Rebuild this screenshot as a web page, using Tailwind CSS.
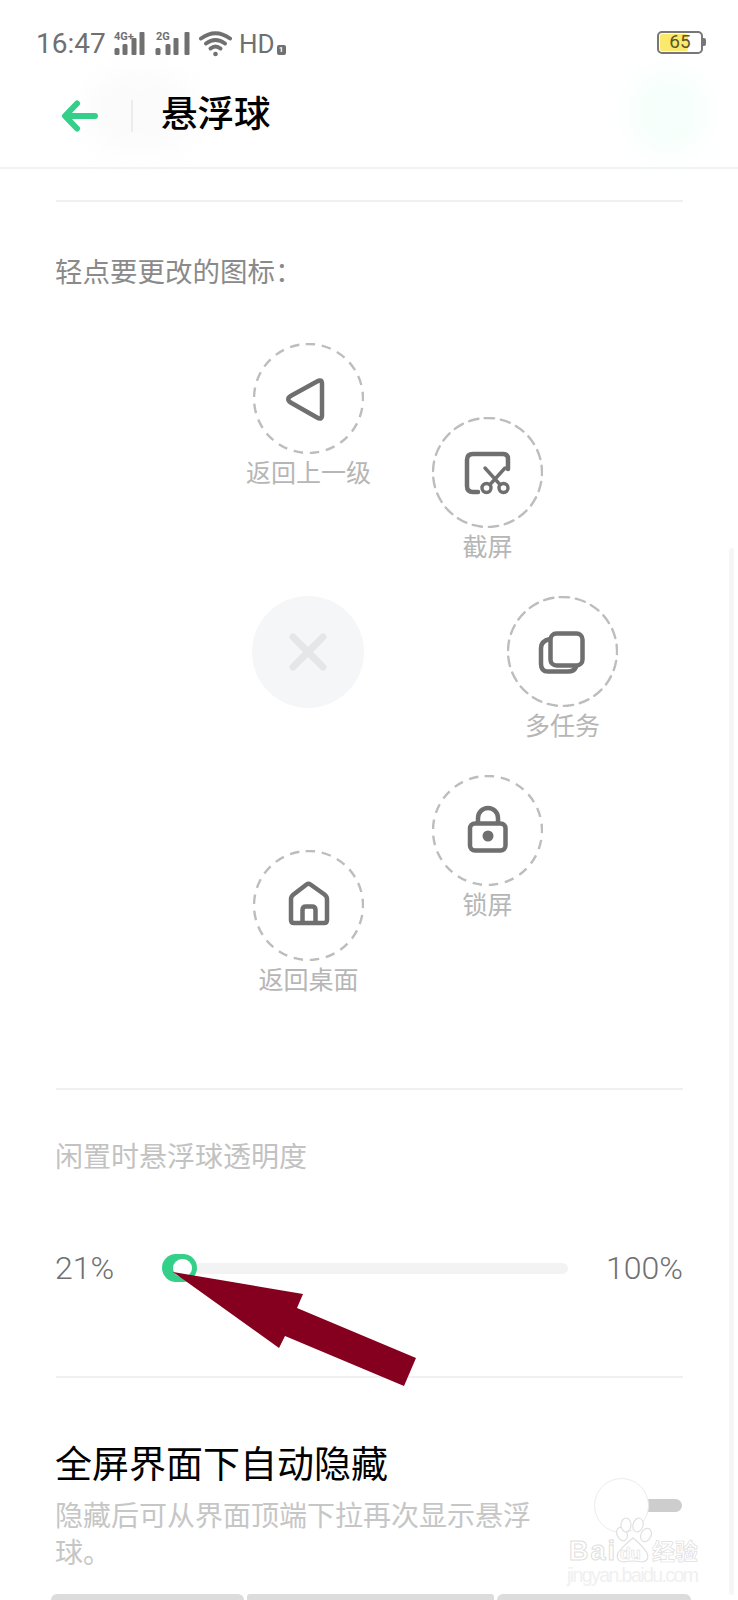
<!DOCTYPE html>
<html lang="zh-CN">
<head>
  <meta charset="UTF-8" />
  <meta name="viewport" content="width=device-width, initial-scale=1.0"/>
  <title>悬浮球</title>
  <script src="https://cdn.jsdelivr.net/npm/@tailwindcss/browser@4"></script>
</head>
<body class="bg-white">
<div class="relative w-[738px] h-[1600px] overflow-hidden bg-white [font-family:Roboto,'Noto_Sans_CJK_SC',sans-serif]">

  <!-- Faint smudges left in the header -->
  <div class="absolute left-[85px] top-[72px] w-[110px] h-[80px] rounded-full bg-[#fbfbfb] blur-md"></div>
  <div class="absolute left-[628px] top-[70px] w-[80px] h-[85px] rounded-full bg-[#f6fffb] blur-md"></div>

  <!-- Scrollbar -->
  <div class="absolute left-[729px] top-[548px] w-[5px] h-[1047px] rounded-full bg-[#f6f6f6]"></div>

  <!-- Status bar -->
  <div class="relative h-[74px] pt-[13px] pl-[36px] pr-[35px] flex items-center justify-between text-[#707070]">
    <div class="flex items-center">
      <span class="text-[28px] leading-none w-[78px]">16:47</span>
      <svg class="w-[80px] h-[26px]" viewBox="0 0 80 26" fill="#707070">
        <text x="0" y="9" font-size="11" font-weight="700" font-family="Roboto">4G+</text>
        <rect x="0.5" y="17" width="5" height="7" rx="1.5"/><rect x="8.5" y="13" width="5" height="11" rx="1.5"/><rect x="17.5" y="7" width="5" height="17" rx="1"/><rect x="25.5" y="1" width="5" height="23" rx="1"/>
        <text x="42" y="9" font-size="11" font-weight="700" font-family="Roboto">2G</text>
        <rect x="41.5" y="17" width="5" height="7" rx="1.5"/><rect x="51.5" y="13" width="5" height="11" rx="1.5"/><rect x="59.5" y="7" width="5" height="17" rx="1"/><rect x="70.5" y="1" width="5" height="23" rx="1"/>
      </svg>
      <svg class="w-[33px] h-[26px] ml-[5px]" viewBox="0 0 33 26" fill="none" stroke="#707070" stroke-width="4" stroke-linecap="round">
        <path d="M2 7.5Q16.5 -3 31 7.5"/>
        <path d="M7 12.5Q16.5 5.5 26 12.5"/>
        <path d="M11.5 17.5Q16.5 13.5 21.5 17.5"/>
        <circle cx="16.5" cy="23" r="2.3" fill="#707070" stroke="none"/>
      </svg>
      <span class="ml-[7px] text-[26px] leading-none">HD</span>
      <span class="ml-[2px] mt-[12px] w-[9px] h-[10px] rounded-[2px] bg-[#707070] text-white text-[8px] leading-[10px] text-center font-bold">1</span>
    </div>
    <div class="relative w-[46px] h-[23px] mt-[-2px] rounded-[5px] border-[2.5px] border-[#777777] overflow-visible">
      <div class="absolute left-[1px] top-[1px] bottom-[1px] w-[28px] rounded-[2px] bg-[#fbe96e]"></div>
      <span class="relative block text-center text-[19px] leading-[18px] text-[#5e5522]">65</span>
      <div class="absolute right-[-5px] top-[5px] w-[3px] h-[8px] rounded-r-[2px] bg-[#777777]"></div>
    </div>
  </div>

  <!-- Title bar -->
  <div class="relative h-[95px] pb-[10px] flex items-center border-b-2 border-[#f2f2f2]">
    <svg class="ml-[61px] w-[38px] h-[32px]" viewBox="0 0 38 32" fill="none" stroke="#34d08a" stroke-width="6" stroke-linecap="round" stroke-linejoin="round">
      <path d="M34 16H5M16 3.5L4 16L16 28.5"/>
    </svg>
    <div class="ml-[32px] w-[2px] h-[32px] bg-[#ececec]"></div>
    <h1 class="ml-[28px] text-[36.5px] leading-none font-medium text-black">悬浮球</h1>
  </div>

  <div class="relative pl-[56px] pr-[55px]">
    <div class="mt-[31px] border-t-2 border-[#f0f0f0]"></div>
    <p class="mt-[51px] -ml-px text-[27.5px] leading-[40px] text-[#8a8a8a]">轻点要更改的图标&#xFF1A;</p>

    <!-- Floating ball menu: the item places are the content here -->
    <div class="relative h-[795px] text-[25px] leading-[40px] text-[#b6b6b6]">

      <div class="absolute left-[197px] top-[50px] w-[111px] flex flex-col items-center">
        <svg class="w-[111px] h-[111px]" viewBox="0 0 111 111" fill="none" stroke="#6f6f6f" stroke-width="4.5" stroke-linejoin="round">
          <circle cx="55.5" cy="55.5" r="54.5" transform="rotate(-93 55.5 55.5)" stroke="#bdbdbd" stroke-width="2.4" stroke-dasharray="9.5 6.8"/>
          <path d="M64 38.5Q69 35.5 69 41V72Q69 77.5 64 74.5L38.5 60Q32 56 38.5 52.5Z"/>
        </svg>
        <span class="whitespace-nowrap">返回上一级</span>
      </div>

      <div class="absolute left-[376px] top-[124px] w-[111px] flex flex-col items-center">
        <svg class="w-[111px] h-[111px]" viewBox="0 0 111 111" fill="none" stroke="#6f6f6f" stroke-width="4.5" stroke-linecap="round">
          <circle cx="55.5" cy="55.5" r="54.5" transform="rotate(-93 55.5 55.5)" stroke="#bdbdbd" stroke-width="2.4" stroke-dasharray="9.5 6.8"/>
          <path d="M76 52V42Q76 37 71 37H41Q35 37 35 43V69Q35 75 41 75H46"/>
          <g stroke-width="3.4">
            <circle cx="54.5" cy="71" r="4.5"/><circle cx="71.5" cy="71" r="4.5"/>
            <path d="M53 51L67.5 67M73 51L58.5 67"/>
          </g>
        </svg>
        <span class="whitespace-nowrap">截屏</span>
      </div>

      <div class="absolute left-[196px] top-[303px] w-[112px] h-[112px] rounded-full bg-[#f4f6f8] flex items-center justify-center">
        <svg class="w-[112px] h-[112px]" viewBox="0 0 112 112" fill="none" stroke="#e6e6e6" stroke-width="7" stroke-linecap="round">
          <path d="M41 41L71 71M71 41L41 71"/>
        </svg>
      </div>

      <div class="absolute left-[451px] top-[303px] w-[111px] flex flex-col items-center">
        <svg class="w-[111px] h-[111px]" viewBox="0 0 111 111" fill="none" stroke="#6f6f6f" stroke-width="4.5" stroke-linecap="round">
          <circle cx="55.5" cy="55.5" r="54.5" transform="rotate(-93 55.5 55.5)" stroke="#bdbdbd" stroke-width="2.4" stroke-dasharray="9.5 6.8"/>
          <rect x="43.5" y="37.5" width="32" height="32" rx="6"/>
          <path d="M43 43Q34 45 34 52V68Q34 75.5 41 75.5H61Q67 75.5 69 71"/>
        </svg>
        <span class="whitespace-nowrap">多任务</span>
      </div>

      <div class="absolute left-[376px] top-[482px] w-[111px] flex flex-col items-center">
        <svg class="w-[111px] h-[111px]" viewBox="0 0 111 111" fill="none" stroke="#6f6f6f" stroke-width="4.5">
          <circle cx="55.5" cy="55.5" r="54.5" transform="rotate(-93 55.5 55.5)" stroke="#bdbdbd" stroke-width="2.4" stroke-dasharray="9.5 6.8"/>
          <rect x="38" y="48.5" width="35.5" height="27" rx="5"/>
          <path d="M46 48V43A10 10 0 0 1 66 43V48"/>
          <circle cx="56" cy="61" r="5.5" fill="#6f6f6f" stroke="none"/>
        </svg>
        <span class="whitespace-nowrap">锁屏</span>
      </div>

      <div class="absolute left-[197px] top-[557px] w-[111px] flex flex-col items-center">
        <svg class="w-[111px] h-[111px]" viewBox="0 0 111 111" fill="none" stroke="#6f6f6f" stroke-width="4.5" stroke-linejoin="round">
          <circle cx="55.5" cy="55.5" r="54.5" transform="rotate(-93 55.5 55.5)" stroke="#bdbdbd" stroke-width="2.4" stroke-dasharray="9.5 6.8"/>
          <path d="M53.5 34.5Q55.5 33 57.5 34.5L71.5 44.5Q74 46.5 74 49V70Q74 73 71 73H41Q38 73 38 70V49Q38 46.5 40.5 44.5Z"/>
          <path d="M49.5 73V60Q49.5 56.5 53 56.5H59Q62.5 56.5 62.5 60V73"/>
        </svg>
        <span class="whitespace-nowrap">返回桌面</span>
      </div>
    </div>

    <div class="border-t-2 border-[#f0f0f0]"></div>
    <p class="mt-[48px] -ml-px text-[28px] leading-[40px] text-[#c2c2c2]">闲置时悬浮球透明度</p>

    <!-- Slider -->
    <div class="mt-[70px] h-[40px] flex items-center text-[32px] leading-none font-light text-[#707070]">
      <span class="w-[57px] -ml-px mr-px">21%</span>
      <div class="relative ml-[49px] w-[406px] h-[28px]">
        <div class="absolute left-[33px] right-0 top-[9px] h-[11px] rounded-full bg-[#f3f3f3]"></div>
        <div class="absolute left-0 top-0 w-[35px] h-[28px] rounded-full bg-[#34d08a]">
          <div class="ml-[11px] mt-[5px] w-[19px] h-[18px] rounded-full bg-white"></div>
        </div>
      </div>
      <span class="ml-auto">100%</span>
    </div>

    <div class="mt-[88px] border-t-2 border-[#f0f0f0]"></div>

    <!-- Auto hide row -->
    <h2 class="mt-[64px] -ml-px text-[37px] leading-[48px] text-black">全屏界面下自动隐藏</h2>
    <p class="mt-[8px] -ml-px w-[490px] text-[28px] leading-[37px] text-[#c6c6c6]">隐藏后可从界面顶端下拉再次显示悬浮球。</p>

    <!-- Cut-off row at the bottom edge -->
    <div class="mt-[22px] -ml-[5px] flex gap-[3px]">
      <div class="w-[193px] h-[12px] shrink-0 rounded-t-[6px] bg-[#dcdcdc]"></div>
      <div class="w-[247px] h-[12px] shrink-0 rounded-t-[3px] bg-[#dcdcdc]"></div>
      <div class="w-[194px] h-[12px] shrink-0 rounded-t-[6px] bg-[#dcdcdc]"></div>
    </div>
  </div>

  <!-- Switch -->
  <div class="absolute left-[647px] top-[1499px] w-[35px] h-[13px] rounded-r-full bg-[#cdcdcd]"></div>
  <div class="absolute left-[594px] top-[1478px] w-[55px] h-[55px] rounded-full border border-[#ececec] bg-white"></div>

  <!-- Red arrow drawn over the screenshot -->
  <svg class="absolute left-0 top-0 w-[738px] h-[1600px] pointer-events-none" viewBox="0 0 738 1600">
    <polygon points="173,1272 303,1294 297,1308 416,1358 404,1386 285,1336 279,1348" fill="#85001e"/>
  </svg>

  <!-- Baidu watermark -->
  <svg class="absolute left-[560px] top-[1515px] w-[178px] h-[72px]" viewBox="0 0 178 72" fill="none">
    <text x="9" y="45" font-size="27" font-weight="700" font-family="Liberation Sans" stroke="#e0e0e0" fill="#ffffff" textLength="46">Bai</text>
    <g stroke="#e0e0e0" stroke-width="1.2" fill="#ffffff">
      <ellipse cx="62" cy="19" rx="5" ry="7" transform="rotate(-25 62 19)"/>
      <ellipse cx="66" cy="10" rx="5" ry="7"/>
      <ellipse cx="78" cy="10" rx="5" ry="7" transform="rotate(15 78 10)"/>
      <ellipse cx="86" cy="20" rx="5" ry="7" transform="rotate(25 86 20)"/>
      <path d="M73 23Q82 30 87 38Q90 46 82 47Q73 45 64 47Q55 46 58 38Q64 30 73 23Z"/>
    </g>
    <text x="60" y="44" font-size="17" font-weight="700" font-family="Liberation Sans" stroke="#e0e0e0" stroke-width="0.6" fill="#ffffff">du</text>
    <text x="92" y="45" font-size="23" font-weight="700" font-family="Noto Sans CJK SC" stroke="#e0e0e0" stroke-width="0.7" fill="#ffffff">经验</text>
    <text x="7" y="67" font-size="19.5" font-family="Liberation Sans" fill="#f0f0f0" textLength="132">jingyan.baidu.com</text>
  </svg>
</div>
</body>
</html>
